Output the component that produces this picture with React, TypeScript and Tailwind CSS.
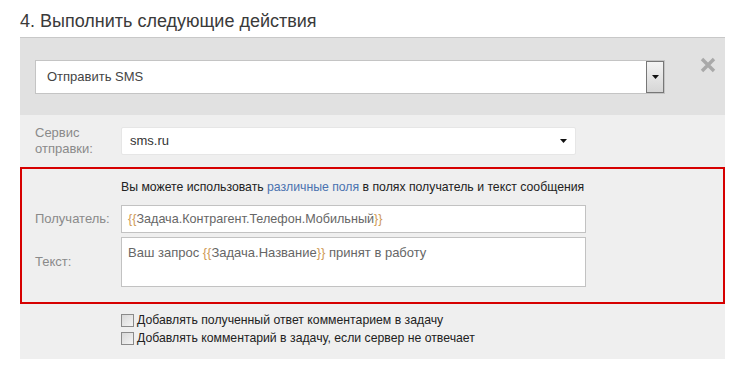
import React from "react";

function Tag({ children }: { children: React.ReactNode }) {
  return (
    <>
      <span className="text-[#cf9a55]">{"{{"}</span>
      {children}
      <span className="text-[#cf9a55]">{"}}"}</span>
    </>
  );
}

function Checkbox() {
  return (
    <span className="inline-block w-[13px] h-[13px] border border-[#8a8a8a] bg-gradient-to-br from-[#d8d8d8] to-[#f4f4f4] mr-[3px] shrink-0" />
  );
}

export default function App() {
  return (
    <div
      className="w-[745px] h-[369px] bg-white overflow-hidden"
      style={{ fontFamily: '"Liberation Sans", Arial, sans-serif' }}
    >
      <div className="h-[37px] pl-[20px] pt-[11px] text-[18px] leading-[20px] text-[#3a3a3a]">
        4. Выполнить следующие действия
      </div>
      <div className="mx-[20px] w-[705px]">
        {/* top band */}
        <div className="bg-[#e1e1e1] border-t border-[#c8c8c8] h-[78px] flex pl-[15px] pt-[22px]">
          <div className="w-[630px] h-[34px] bg-white border border-[#c4c4c4] flex items-stretch">
            <div className="flex-1 pl-[11px] flex items-center text-[13px] text-[#444]">
              Отправить SMS
            </div>
            <div className="w-[18px] border border-[#777] bg-gradient-to-b from-[#f4f4f4] to-[#d6d6d6] flex items-center justify-center">
              <svg width="7" height="4" viewBox="0 0 7 4">
                <path d="M0 0h7L3.5 4z" fill="#111" />
              </svg>
            </div>
          </div>
          <div className="ml-[35px] mt-[-3px]">
            <svg width="16" height="16" viewBox="0 0 16 16">
              <path d="M2 2L14 14M14 2L2 14" stroke="#a9a9a9" strokeWidth="3.4" />
            </svg>
          </div>
        </div>
        {/* lower band */}
        <div className="bg-[#efefef] h-[244px] pt-[12px]">
          <div className="flex pl-[15px] h-[28px]">
            <div className="w-[86px] text-[13px] leading-[16px] text-[#8a8a8a] flex flex-col justify-center">
              <span>Сервис</span>
              <span>отправки:</span>
            </div>
            <div className="w-[455px] h-[28px] bg-white border border-[#e6e6e6] rounded-[2px] flex items-center pl-[8px] pr-[8px] text-[13px] text-[#333]">
              <span className="flex-1">sms.ru</span>
              <svg width="7" height="4" viewBox="0 0 7 4">
                <path d="M0 0h7L3.5 4z" fill="#111" />
              </svg>
            </div>
          </div>
          {/* red box */}
          <div className="mt-[12px] h-[137px] border-2 border-[#d60000] pl-[13px] pt-[10px]">
            <div className="pl-[86px] text-[12.25px] leading-[16px] text-[#222]">
              Вы можете использовать{" "}
              <span className="text-[#4a72b0]">различные поля</span> в полях получатель и текст сообщения
            </div>
            <div className="flex mt-[10px] h-[28px]">
              <div className="w-[86px] text-[13px] text-[#8a8a8a] flex items-center">Получатель:</div>
              <div className="w-[465px] bg-white border border-[#c2c2c2] flex items-center pl-[6px] text-[12.6px] text-[#666]">
                <span>
                  <Tag>Задача.Контрагент.Телефон.Мобильный</Tag>
                </span>
              </div>
            </div>
            <div className="flex mt-[4px] h-[50px]">
              <div className="w-[86px] text-[13px] text-[#8a8a8a] flex items-center">Текст:</div>
              <div className="w-[465px] bg-white border border-[#c2c2c2] pl-[6px] pt-[7px] text-[13px] leading-[16px] text-[#666]">
                Ваш запрос <Tag>Задача.Название</Tag> принят в работу
              </div>
            </div>
          </div>
          <div className="pl-[101px] pt-[10px] flex flex-col gap-[5px] text-[12.25px] leading-[13px] text-[#222]">
            <label className="flex items-center">
              <Checkbox />
              Добавлять полученный ответ комментарием в задачу
            </label>
            <label className="flex items-center">
              <Checkbox />
              Добавлять комментарий в задачу, если сервер не отвечает
            </label>
          </div>
        </div>
      </div>
    </div>
  );
}
